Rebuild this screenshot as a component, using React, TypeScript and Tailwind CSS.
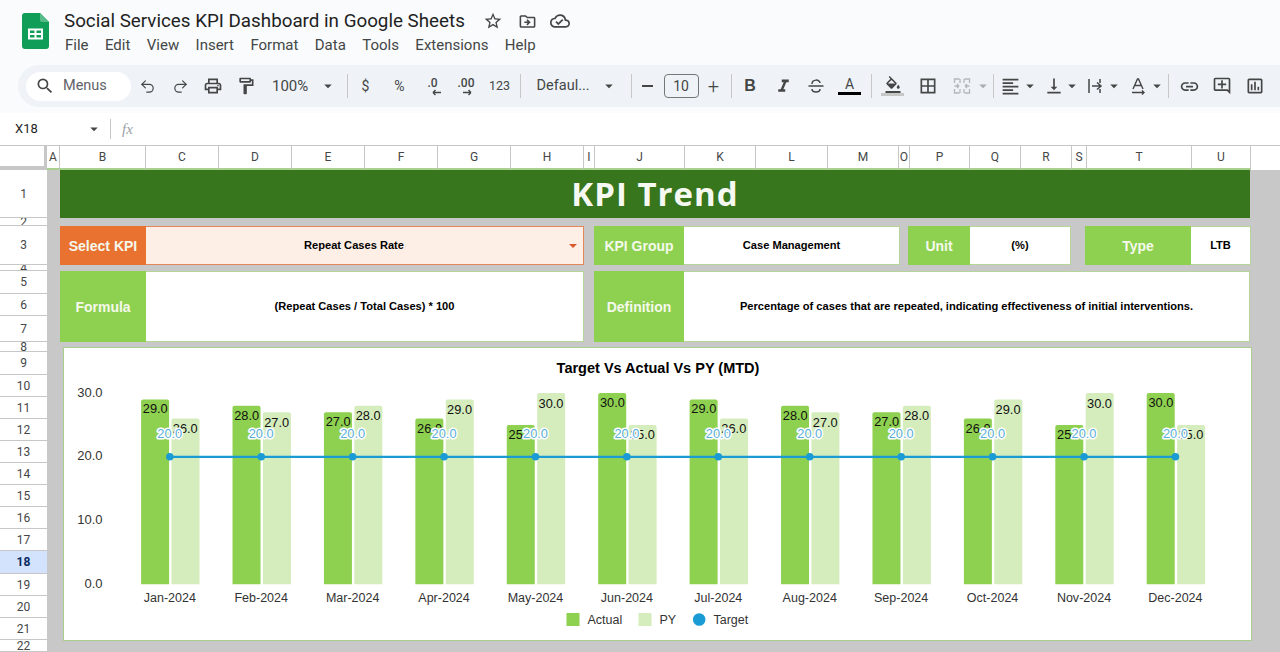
import type { ReactNode } from "react";
import { Redo2, Undo2 } from "lucide-react";
import {
  MdArrowDropDown,
  MdBorderAll,
  MdFormatAlignLeft,
  MdFormatColorFill,
  MdFormatItalic,
  MdLink,
  MdOutlineAddComment,
  MdOutlineCloudDone,
  MdOutlineDriveFileMove,
  MdOutlineFormatPaint,
  MdOutlineInsertChart,
  MdOutlineLocalPrintshop,
  MdSearch,
  MdStarBorder,
  MdVerticalAlignBottom,
} from "react-icons/md";

const columns: [string, number][] = [
  ["A", 13], ["B", 86], ["C", 73], ["D", 73], ["E", 73], ["F", 73], ["G", 73], ["H", 73], ["I", 11],
  ["J", 90], ["K", 71], ["L", 72], ["M", 71], ["O", 11], ["P", 60], ["Q", 51], ["R", 51], ["S", 15],
  ["T", 105], ["U", 59],
];

const rows: [string, number][] = [
  ["1", 48], ["2", 8], ["3", 39], ["4", 6], ["5", 23], ["6", 22], ["7", 26], ["8", 10], ["9", 23],
  ["10", 22], ["11", 22], ["12", 22], ["13", 22], ["14", 22], ["15", 22], ["16", 22], ["17", 22],
  ["18", 23], ["19", 22], ["20", 22], ["21", 22], ["22", 12],
];

const months = ["Jan", "Feb", "Mar", "Apr", "May", "Jun", "Jul", "Aug", "Sep", "Oct", "Nov", "Dec"];
const actual = [29, 28, 27, 26, 25, 30, 29, 28, 27, 26, 25, 30];
const py = [26, 27, 28, 29, 30, 25, 26, 27, 28, 29, 30, 25];

const BASE = 583.7;
const UNIT = 6.37;
const center = (i: number) => 169.3 + i * 91.42;
const toY = (v: number) => BASE - v * UNIT;

function Tool({ w = 33, children }: { w?: number; children: ReactNode }) {
  return (
    <div className="flex shrink-0 items-center justify-center text-[#444746]" style={{ width: w }}>
      {children}
    </div>
  );
}

function Sep({ ml = 0, mr = 0 }: { ml?: number; mr?: number }) {
  return <div className="h-[24px] w-px shrink-0 bg-[#c7c7c7]" style={{ marginLeft: ml, marginRight: mr }} />;
}

function Caret({ className = "" }: { className?: string }) {
  return <MdArrowDropDown size={18} className={`text-[#444746] ${className}`} />;
}

function SheetsLogo() {
  return (
    <svg width="27" height="36" viewBox="0 0 27 36">
      <path d="M3 0h15l9 9v24a3 3 0 0 1-3 3H3a3 3 0 0 1-3-3V3a3 3 0 0 1 3-3z" fill="#0f9d58" />
      <path d="M18 0l9 9h-7a2 2 0 0 1-2-2z" fill="#57bb8a" />
      <path d="M6 15.5h15v11H6zM8 17.5v2.5h4.5v-2.5zM14.5 17.5v2.5H19v-2.5zM8 22v2.5h4.5V22zM14.5 22v2.5H19V22z" fill="#fff" fillRule="evenodd" />
    </svg>
  );
}

function Decimal({ label, dir }: { label: string; dir: "left" | "right" }) {
  return (
    <div className="flex flex-col items-center font-['Roboto'] text-[12px] font-medium leading-[12px] text-[#444746]">
      <span>{label}</span>
      <svg width="10" height="7" viewBox="0 0 10 7" className={dir === "left" ? "ml-[8px]" : "ml-[2px]"}>
        {dir === "left" ? (
          <path d="M1 3.5h8M1 3.5l2.5-2.5M1 3.5L3.5 6" stroke="#444746" strokeWidth="1.4" fill="none" />
        ) : (
          <path d="M1 3.5h8M9 3.5L6.5 1M9 3.5L6.5 6" stroke="#444746" strokeWidth="1.4" fill="none" />
        )}
      </svg>
    </div>
  );
}

function Toolbar() {
  return (
    <div className="ml-[18px] flex h-[42px] items-center rounded-l-[21px] bg-[#eff3f8] pl-[8px] font-['Roboto']">
      <div className="flex h-[29px] w-[104.5px] shrink-0 items-center rounded-full bg-white pl-[9px]">
        <MdSearch size={20} className="text-[#444746]" />
        <span className="ml-[8px] text-[14.5px] text-[#5f6368]">Menus</span>
      </div>
      <Tool><Undo2 size={17} strokeWidth={1.7} /></Tool>
      <Tool><Redo2 size={17} strokeWidth={1.7} /></Tool>
      <Tool><MdOutlineLocalPrintshop size={20} /></Tool>
      <Tool><MdOutlineFormatPaint size={20} /></Tool>
      <div className="flex w-[84px] shrink-0 items-center pl-[9.5px] text-[15px] text-[#444746]">
        <span>100%</span>
        <Caret className="ml-[11px]" />
      </div>
      <Sep />
      <Tool w={36}><span className="text-[14px]">$</span></Tool>
      <Tool w={32}><span className="text-[14px]">%</span></Tool>
      <Tool w={34}><Decimal label=".0" dir="left" /></Tool>
      <Tool><Decimal label=".00" dir="right" /></Tool>
      <Tool w={34}><span className="text-[12.5px]">123</span></Tool>
      <Sep ml={3} />
      <div className="flex w-[110px] shrink-0 items-center pl-[16px] text-[14.5px] text-[#444746]">
        <span>Defaul...</span>
        <Caret className="ml-[10px]" />
      </div>
      <Sep />
      <Tool w={32}><span className="h-[1.5px] w-[11px] bg-[#444746]" /></Tool>
      <div className="flex h-[24px] w-[35px] shrink-0 items-center justify-center rounded-[4px] border border-[#747775] text-[14px] text-[#444746]">10</div>
      <Tool w={30}><span className="text-[20px] font-light leading-none">+</span></Tool>
      <Sep ml={2} mr={2} />
      <Tool><span className="font-['Liberation_Sans'] text-[16px] font-bold">B</span></Tool>
      <Tool><MdFormatItalic size={21} /></Tool>
      <Tool>
        <svg width="16" height="16" viewBox="0 0 16 16" fill="none" stroke="#444746" strokeWidth="1.5">
          <path d="M0.5 8h15M4 6c0-5 8-5 8-1M4 11c0 4 8 4 8 0" />
        </svg>
      </Tool>
      <Tool w={34}>
        <div className="flex flex-col items-center">
          <span className="text-[14px] leading-[15px]">A</span>
          <span className="h-[3px] w-[23px] bg-black" />
        </div>
      </Tool>
      <Sep ml={4} />
      <Tool w={42}>
        <div className="flex flex-col items-center">
          <MdFormatColorFill size={18} />
          <span className="mt-[-1px] h-[3px] w-[23px] bg-[#c4c7c5]" />
        </div>
      </Tool>
      <Tool w={28}><MdBorderAll size={20} /></Tool>
      <Tool w={41}>
        <svg width="18" height="18" viewBox="0 0 18 18" fill="none" stroke="#b4b7ba" strokeWidth="1.3">
          <path d="M1.5 6V2h5M11.5 2h5v4M1.5 12v4h5M11.5 16h5v-4M7 2v4M11 2v4M7 12v4M11 12v4M1.5 9H6M6 9L4 7M6 9l-2 2M16.5 9H12M12 9l2-2M12 9l2 2" />
        </svg>
      </Tool>
      <Caret className="ml-[-9px] opacity-40" />
      <Sep ml={1} />
      <Tool w={34}><MdFormatAlignLeft size={21} /></Tool>
      <Caret className="ml-[-7px] mr-[1px]" />
      <Tool w={28}><MdVerticalAlignBottom size={20} /></Tool>
      <Caret className="ml-[-5px]" />
      <Tool w={28}>
        <svg width="16" height="16" viewBox="0 0 16 16" fill="none" stroke="#444746" strokeWidth="1.5">
          <path d="M2 1v14M13 1v4M13 11v4M5 8h9M10 4.5L14 8l-4 3.5" />
        </svg>
      </Tool>
      <Caret className="ml-[-4px]" />
      <Tool w={30}>
        <svg width="18" height="18" viewBox="0 0 18 18" fill="none" stroke="#444746" strokeWidth="1.4">
          <path d="M4 12L8.5 2h1L14 12M5.5 8.5h7M3 15.5h12M13 13.5l2 2-2 2" />
        </svg>
      </Tool>
      <Caret className="ml-[-5px]" />
      <Sep ml={2} />
      <div className="ml-[3px] flex"><Tool w={36}><MdLink size={21} /></Tool></div>
      <Tool w={28}><MdOutlineAddComment size={20} /></Tool>
      <Tool w={38}><MdOutlineInsertChart size={20} /></Tool>
    </div>
  );
}

function Header() {
  return (
    <div className="h-[113px] shrink-0 bg-[#f9fbfd]">
      <div className="flex h-[65px]">
        <div className="ml-[22px] mt-[13px]"><SheetsLogo /></div>
        <div className="ml-[15px] mt-[8px] font-['Roboto']">
          <div className="flex items-center">
            <span className="text-[18.8px] leading-[26px] text-[#1f1f1f]">Social Services KPI Dashboard in Google Sheets</span>
            <MdStarBorder size={20} className="ml-[18px] text-[#444746]" />
            <MdOutlineDriveFileMove size={19} className="ml-[15px] text-[#444746]" />
            <MdOutlineCloudDone size={20} className="ml-[13px] text-[#444746]" />
          </div>
          <div className="mt-[1px] ml-[1px] flex gap-[16.4px] text-[15px] leading-[20px] text-[#444746]">
            <span>File</span>
            <span>Edit</span>
            <span>View</span>
            <span>Insert</span>
            <span>Format</span>
            <span>Data</span>
            <span>Tools</span>
            <span>Extensions</span>
            <span>Help</span>
          </div>
        </div>
      </div>
      <Toolbar />
    </div>
  );
}

function FormulaBar() {
  return (
    <div className="flex h-[32px] shrink-0 items-center bg-white font-['Roboto'] text-[#444746]">
      <span className="ml-[15px] w-[70px] text-[13px] text-[#1f1f1f]">X18</span>
      <Caret />
      <span className="ml-[7px] h-[20px] w-px bg-[#c7c7c7]" />
      <span className="ml-[11px] font-['Liberation_Serif'] text-[15px] italic text-[#9aa0a6]">fx</span>
    </div>
  );
}

function ColumnHeader() {
  return (
    <div className="flex h-[25px] shrink-0 border-t border-[#c4c7c5] bg-white">
      <div className="h-full w-[47px] shrink-0 border-r-[3px] border-b-[4px] border-[#c7c7c7]" />
      {columns.map(([name, w]) => (
        <div
          key={name}
          style={{ width: w }}
          className="flex shrink-0 items-center justify-center border-r border-b-2 border-r-[#c7c7c7] border-b-[#a9d08e] font-['Roboto'] text-[12px] text-[#444746]"
        >
          {name}
        </div>
      ))}
    </div>
  );
}

function RowHeader() {
  return (
    <div className="w-[47px] shrink-0 bg-white">
      {rows.map(([name, h]) => (
        <div
          key={name}
          style={{ height: h }}
          className={`flex items-center justify-center overflow-hidden border-b border-[#c7c7c7] font-['Roboto'] text-[12px] ${
            name === "18" ? "bg-[#d3e3fd] font-bold text-[#0b2a63]" : "text-[#444746]"
          }`}
        >
          {name}
        </div>
      ))}
    </div>
  );
}

function Label({ w, bg = "bg-[#8ed04f]", children }: { w: number; bg?: string; children: ReactNode }) {
  return (
    <div style={{ width: w }} className={`flex shrink-0 items-center justify-center pt-[1px] text-[14px] font-bold text-[#f4f9ec] ${bg}`}>
      {children}
    </div>
  );
}

function Value({ w, children }: { w: number; children: ReactNode }) {
  return (
    <div style={{ width: w }} className="flex shrink-0 items-center justify-center border border-l-0 border-[#b5d59a] bg-white pb-[1px] text-[11.1px] font-bold text-black">
      {children}
    </div>
  );
}

function Chart() {
  return (
    <div className="ml-[2.5px] mt-[4.5px] h-[294px] w-[1189px] border border-[#a9cd8c] bg-white">
      <svg width="1187" height="292" viewBox="63.5 347.5 1187 292" className="block font-['Liberation_Sans']">
        <text x="657.5" y="372.5" textAnchor="middle" fontSize="14.5" fontWeight="700" fill="#000">
          Target Vs Actual Vs PY (MTD)
        </text>
        {[30, 20, 10, 0].map((v) => (
          <text key={v} x="102" y={toY(v) + 3.5} textAnchor="end" fontSize="13" fill="#333">
            {v.toFixed(1)}
          </text>
        ))}
        {months.map((m, i) => {
          const c = center(i);
          const ya = toY(actual[i]);
          const yp = toY(py[i]);
          return (
            <g key={m}>
              <path d={`M${c - 28.7} ${BASE}V${ya + 2}q0-2 2-2h24q2 0 2 2V${BASE}z`} fill="#8ed04f" />
              <path d={`M${c + 1.7} ${BASE}V${yp + 2}q0-2 2-2h24q2 0 2 2V${BASE}z`} fill="#d5ecbd" />
              <text x={c - 14.5} y={ya + 14} textAnchor="middle" fontSize="12.8" fill="#111">{actual[i].toFixed(1)}</text>
              <text x={c + 15.5} y={yp + 14.5} textAnchor="middle" fontSize="12.8" fill="#111">{py[i].toFixed(1)}</text>
              <text x={c} y="601" textAnchor="middle" fontSize="12.5" fill="#333">{m}-2024</text>
            </g>
          );
        })}
        <line x1={center(0)} x2={center(11)} y1="456.3" y2="456.3" stroke="#1a9bd3" strokeWidth="2.3" />
        {months.map((m, i) => (
          <g key={m}>
            <circle cx={center(i)} cy="456.3" r="3.8" fill="#1a9bd3" />
            <text
              x={center(i)}
              y="437.5"
              textAnchor="middle"
              fontSize="12.8"
              fill="#5aaedb"
              stroke="#fff"
              strokeWidth="3"
              strokeLinejoin="round"
              paintOrder="stroke"
            >
              20.0
            </text>
          </g>
        ))}
        <rect x="566" y="612.5" width="13" height="13" fill="#8ed04f" />
        <text x="587" y="623.5" fontSize="12.5" fill="#333">Actual</text>
        <rect x="638" y="612.5" width="13" height="13" fill="#d5ecbd" />
        <text x="659" y="623.5" fontSize="12.5" fill="#333">PY</text>
        <circle cx="698.7" cy="619" r="6.3" fill="#1a9bd3" />
        <text x="713" y="623.5" fontSize="12.5" fill="#333">Target</text>
      </svg>
    </div>
  );
}

function Sheet() {
  return (
    <div className="min-w-0 flex-1 bg-[#c8c8c8] pl-[13px] font-['Liberation_Sans']">
      <div className="flex h-[48px] w-[1190px] items-center justify-center bg-[#38761d] pb-[1px] font-['Open_Sans'] text-[33px] font-bold tracking-[1px] text-[#f6f9f2]">
        KPI Trend
      </div>
      <div className="mt-[8px] flex h-[39px]">
        <Label w={86} bg="bg-[#ea7231]">Select KPI</Label>
        <div className="relative flex w-[438px] shrink-0 items-center justify-center border border-l-0 border-[#e2875a] bg-[#fdeee6] pb-[1px] pr-[21px] text-[11.1px] font-bold text-black">
          Repeat Cases Rate
          <span className="absolute right-[6px] top-[17px] h-0 w-0 border-x-[4px] border-t-[4px] border-x-transparent border-t-[#d9572b]" />
        </div>
        <div className="w-[10px] shrink-0" />
        <Label w={90}>KPI Group</Label>
        <Value w={216}>Case Management</Value>
        <div className="w-[8px] shrink-0" />
        <Label w={62}>Unit</Label>
        <Value w={101}>(%)</Value>
        <div className="w-[14px] shrink-0" />
        <Label w={106}>Type</Label>
        <Value w={60}>LTB</Value>
      </div>
      <div className="mt-[6px] flex h-[71px]">
        <Label w={86}>Formula</Label>
        <Value w={438}>(Repeat Cases / Total Cases) * 100</Value>
        <div className="w-[10px] shrink-0" />
        <Label w={90}>Definition</Label>
        <Value w={566}>Percentage of cases that are repeated, indicating effectiveness of initial interventions.</Value>
      </div>
      <Chart />
    </div>
  );
}

export default function App() {
  return (
    <div className="flex h-[652px] w-[1280px] flex-col overflow-hidden bg-white">
      <Header />
      <FormulaBar />
      <ColumnHeader />
      <div className="flex min-h-0 flex-1">
        <RowHeader />
        <Sheet />
      </div>
    </div>
  );
}
